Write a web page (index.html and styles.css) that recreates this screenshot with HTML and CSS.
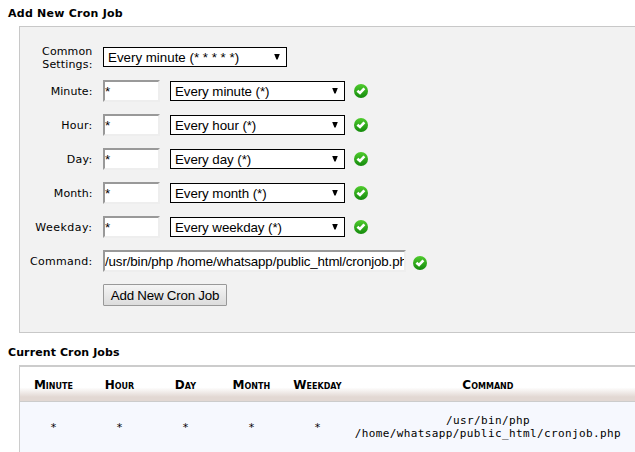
FILE: index.html
```html
<!DOCTYPE html>
<html lang="en">
<head>
<meta charset="utf-8">
<title>Cron Jobs</title>
<link rel="stylesheet" href="styles.css">
</head>
<body>
<svg class="defs" width="0" height="0">
  <defs>
    <linearGradient id="green" x1="0" y1="0" x2="0" y2="1">
      <stop offset="0" stop-color="#50cc2e"/>
      <stop offset="1" stop-color="#148a0c"/>
    </linearGradient>
    <symbol id="ok" viewBox="0 0 14 14">
      <circle cx="7" cy="7" r="7" fill="url(#green)"/>
      <path d="M3.4 6.7 6 9 10.4 4.4" fill="none" stroke="#fff" stroke-width="2.6"/>
    </symbol>
  </defs>
</svg>
<h2 class="title title-add">Add New Cron Job</h2>
<form class="panel">
  <div class="row row-common"><label class="label">Common<br>Settings:</label><div class="select select-common"><span class="value">Every minute (* * * * *)</span><i class="arrow"></i></div></div>
  <div class="row"><label class="label label-tight">Minute:</label><input class="field" value="*"><div class="select"><span class="value">Every minute (*)</span><i class="arrow"></i></div><svg class="ok"><use href="#ok"/></svg></div>
  <div class="row"><label class="label">Hour:</label><input class="field" value="*"><div class="select"><span class="value">Every hour (*)</span><i class="arrow"></i></div><svg class="ok"><use href="#ok"/></svg></div>
  <div class="row"><label class="label">Day:</label><input class="field" value="*"><div class="select"><span class="value">Every day (*)</span><i class="arrow"></i></div><svg class="ok"><use href="#ok"/></svg></div>
  <div class="row"><label class="label label-tight">Month:</label><input class="field" value="*"><div class="select"><span class="value">Every month (*)</span><i class="arrow"></i></div><svg class="ok"><use href="#ok"/></svg></div>
  <div class="row"><label class="label label-wide">Weekday:</label><input class="field" value="*"><div class="select"><span class="value">Every weekday (*)</span><i class="arrow"></i></div><svg class="ok"><use href="#ok"/></svg></div>
  <div class="row"><label class="label">Command:</label><div class="field field-command">/usr/bin/php /home/whatsapp/public_html/cronjob.php</div><svg class="ok ok-command"><use href="#ok"/></svg></div>
  <div class="row"><span class="label"></span><button class="submit" type="button">Add New Cron Job</button></div>
</form>
<h2 class="title">Current Cron Jobs</h2>
<div class="jobs">
  <div class="line head"><span>Minute</span><span>Hour</span><span>Day</span><span>Month</span><span>Weekday</span><span>Command</span></div>
  <div class="line job"><span>*</span><span>*</span><span>*</span><span>*</span><span>*</span><span class="command">/usr/bin/php /home/whatsapp/public_html/cronjob.php</span></div>
</div>
</body>
</html>
```
FILE: styles.css
```css
* { box-sizing: border-box; }
body {
  margin: 0;
  height: 452px;
  overflow: hidden;
  background: #fff;
  color: #000;
  font: 11px/13px "DejaVu Sans", sans-serif;
}
.defs { display: block; height: 0; }
.title {
  margin: 0;
  padding: 7px 0 0 8px;
  height: 26px;
  font-size: 11px;
  line-height: 13px;
  letter-spacing: 0.1px;
}
.title-add { letter-spacing: 0.25px; }
.panel {
  margin: 0 0 0 19px;
  height: 307px;
  padding-top: 13px;
  border: 1px solid #c8c8c8;
  border-right: 0;
  background: #f2f2f2;
}
.row { display: flex; align-items: center; height: 34px; }
.label {
  width: 73px;
  margin-right: 10px;
  padding-right: 0.5px;
  text-align: right;
  letter-spacing: 0.27px;
}
.label-tight { letter-spacing: 0.08px; }
.label-wide { letter-spacing: 0.5px; }
.row-common .label { padding-top: 1px; letter-spacing: 0.15px; }
.field {
  width: 57px;
  height: 22px;
  margin: 0 10px 0 0;
  padding: 0;
  border: 2px solid;
  border-color: #999 #eee #eee #999;
  border-radius: 0;
  background: #fff;
  font: 13.33px/18px "Liberation Sans", sans-serif;
}
.field-command {
  width: 303px;
  margin-right: 7px;
  padding-top: 1px;
  overflow: hidden;
  white-space: nowrap;
  letter-spacing: -0.13px;
}
.select {
  display: flex;
  align-items: center;
  justify-content: space-between;
  width: 175px;
  height: 20px;
  padding: 1px 6px 0 4px;
  border: 1px solid #000;
  background: #fff;
  font: 13.33px/18px "Liberation Sans", sans-serif;
  letter-spacing: -0.07px;
}
.select-common { width: 184px; letter-spacing: 0; }
.arrow {
  width: 6px;
  height: 6px;
  margin-top: -2px;
  background: #000;
  clip-path: polygon(0 0, 100% 0, 60% 100%, 40% 100%);
}
.ok { width: 14px; height: 14px; margin-left: 9px; }
.ok-command { margin: 3px 0 0; }
.submit {
  width: 124px;
  height: 22px;
  padding: 1px 0 0;
  border: 1px solid #999;
  border-radius: 1px;
  background: linear-gradient(#f5f5f5, #dcdcdc);
  color: #000;
  font: 13.33px/18px "Liberation Sans", sans-serif;
  letter-spacing: -0.22px;
}
.panel + .title { padding-top: 13px; height: 32px; }
.jobs {
  margin-left: 19px;
  border-top: 2px solid #ccc;
  border-left: 1px solid #ccc;
}
.line {
  display: grid;
  grid-template-columns: repeat(5, 66px) 275px;
  align-items: center;
  padding-left: 0.4px;
  text-align: center;
}
.head {
  height: 35px;
  padding-top: 3px;
  border-bottom: 1px solid #ccc;
  background: linear-gradient(#fff 60%, #e2d8d3 88%);
  font-size: 12px;
  font-weight: bold;
  font-variant: small-caps;
}
.job { height: 51px; background: #f6f8fe; }
.command {
  margin-top: -2px;
  font-family: "DejaVu Sans Mono", monospace;
  letter-spacing: 0.38px;
}
```
